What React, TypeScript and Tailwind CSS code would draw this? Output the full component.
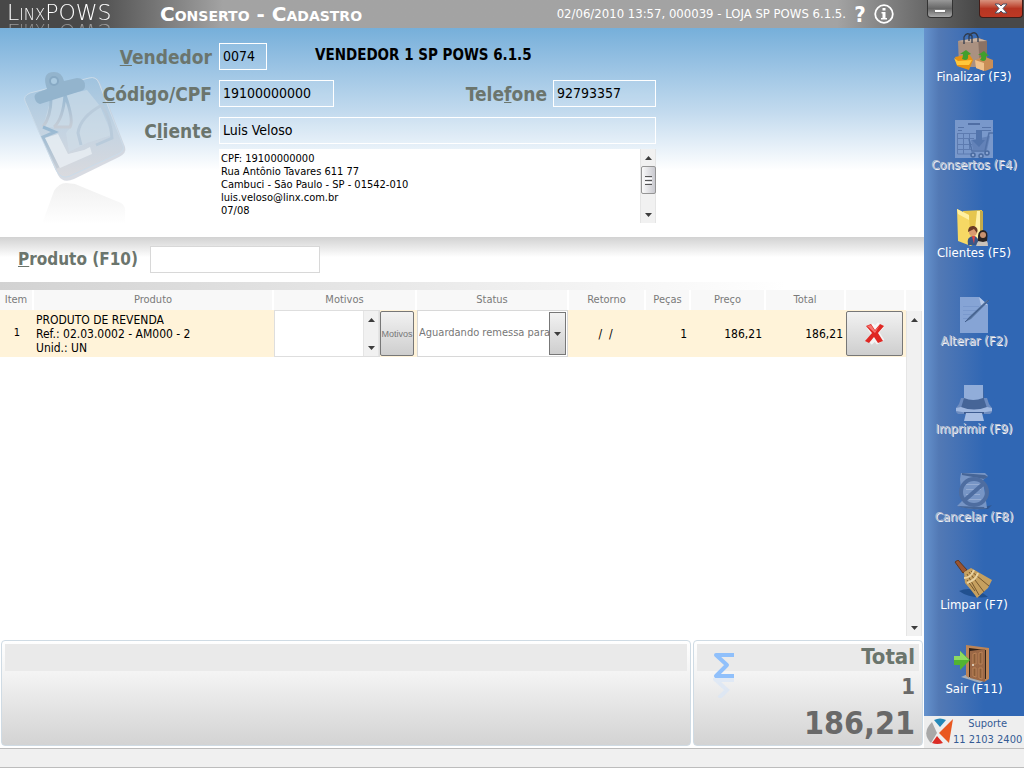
import type { ReactNode } from "react"

interface ActionItem {
  label: string
  icon: ReactNode
  disabled?: boolean
}

const labelClass = "text-[19px] leading-7 font-bold text-[#6b756d]"
const fieldClass = "h-[27px] border border-white bg-white/10 px-[3px] pb-[2px] text-sm text-black outline-none"

function BagIcon() {
  return (
    <svg width="40" height="40" viewBox="0 0 40 40">
      <path d="M4 9 L24 6 L33 9 V35 H5Z" fill="#aa9181" />
      <path d="M24 6 L33 9 V35 H26Z" fill="#8b7264" />
      <path d="M4 9 L24 6 L33 9 L13 10Z" fill="#c9b3a2" />
      <path d="M10 12 V5 Q13 -1 18 4 V11 M15 9 V4 Q21 -3 24 5 V10" fill="none" stroke="#303b4d" strokeWidth="1.3" />
      <path d="M1 25 L15 22 L19 28 L15 38 L3 34Z" fill="#e79212" />
      <path d="M0 26 L4 29 L18 28 L15 33 L3 33Z" fill="#ffc73b" />
      <path d="M22 28 L29 24 L39 28 V36 L31 39 L22 36Z" fill="#c98e56" />
      <path d="M21 28 L30 31 V39 L22 36Z" fill="#efc18b" />
      <path d="M8 27 Q9 25 9 22 L6 22 L12 18 L17 22 L14 23 Q15 28 11 28Z M26 28 Q28 26 27 23 L24 23 L30 19 L35 24 L32 24 Q33 29 29 29Z" fill="#419f2d" />
    </svg>
  )
}

function RepairsIcon() {
  return (
    <svg width="40" height="40" viewBox="0 0 40 40">
      <path d="M1 0 H39 V38 H1Z" fill="#7998cb" />
      <path d="M14 3 H26 V5 H14Z" fill="#506ea4" />
      <path d="M4 7.5 H10 M4 10.5 H8 M28 7.5 H37 M28 10.5 H37" stroke="#5674a9" />
      <path d="M3 13.5 H24 M3 18.5 H20 M3 24.5 H18 M3 29.5 H18 M3.5 14 V34 H17 M9.5 14 V34 M15.5 14 V30" fill="none" stroke="#5d7bb0" />
      <path d="M17 20 L36 16 L33 30 H19Z" fill="#6382b8" />
      <path d="M39 13 H35 L31 31 H18 L15 19" fill="none" stroke="#5272a8" strokeWidth="1.5" />
      <path d="M22 10 H28 V20 H31 L25 27 L18 20 H22Z" fill="#5274ac" />
      <g fill="#8ba5d0" stroke="#496a9f" strokeWidth="1.5"><circle cx="19" cy="35" r="2" /><circle cx="27" cy="36" r="2" /><circle cx="33" cy="33" r="2" /></g>
    </svg>
  )
}

function FolderIcon() {
  return (
    <svg width="40" height="40" viewBox="0 0 40 40">
      <path d="M9 3 L28 2 V31 L17 38 L9 32Z" fill="#e6c64d" />
      <path d="M26 3 H29 V30 L26 33Z" fill="#c5ab4a" />
      <path d="M23 3 H26 V31 H20Z" fill="#fff1a6" />
      <path d="M3 1 L15 7 L17 38 L4 33Z" fill="#f6d864" />
      <path d="M3 1 L15 7 L15 12 L4 6Z" fill="#fff0a2" />
      <path d="M14 37 Q12 29 19 28 Q25 28 25 37Z" fill="#385788" />
      <circle cx="19" cy="24" r="4" fill="#d99b70" />
      <path d="M14 24 Q14 17 20 18 Q25 20 23 25 L20 21Z" fill="#693a25" />
      <path d="M18 28 H21 L20 36Z" fill="#e14645" />
      <path d="M22 38 Q24 31 29 30 Q34 31 34 38Z" fill="#c8c2bb" />
      <path d="M24 33 Q23 22 29 22 Q35 22 33 33 L29 34Z" fill="#292323" />
      <circle cx="29" cy="27" r="3" fill="#c79170" />
    </svg>
  )
}

function EditIcon() {
  return (
    <svg width="40" height="40" viewBox="0 0 40 40">
      <path d="M6 1 H25 L34 9 V37 H6Z" fill="#86a4d5" />
      <path d="M25 1 L27 9 H34Z" fill="#b4c7e7" />
      <path d="M9 10.5 H25 M9 14.5 H24 M9 18.5 H20 M9 22.5 H15" stroke="#7a99cd" />
      <path d="M33 4 L15 21 L11 26 L17 23 L35 5Z" fill="#56749f" />
      <path d="M11 26 L35 4" stroke="#405c8b" />
    </svg>
  )
}

function PrinterIcon() {
  return (
    <svg width="40" height="40" viewBox="0 0 40 40">
      <path d="M7 14 H33 L35 20 L38 24 V28 L36 30 H4 L2 28 V24 L5 20Z" fill="#6d8cc0" />
      <path d="M10 1 H29 L30 15 L33 24 Q20 29 7 24 L10 14Z" fill="#466597" />
      <path d="M10 1 H29 V14 Q19 18 10 14Z" fill="#91add9" />
      <path d="M2 24 L7 23 Q20 28 33 23 L38 24 V27 Q20 31 2 27Z" fill="#9fb7df" />
      <path d="M10 28 H30 V30 H10Z" fill="#3e5c90" />
      <path d="M12 29 H28 L30 37 H10Z" fill="#a8bee3" />
    </svg>
  )
}

function CancelIcon() {
  return (
    <svg width="40" height="40" viewBox="0 0 40 40">
      <path d="M23 37 L38 33 L34 37Z" fill="#31578f" />
      <path d="M7 1 H31 L34 4 L29 8 L33 36 Q21 39 3 34 L8 29 L6 7Z" fill="#7795c5" />
      <path d="M8 1 L31 3 L34 5 L30 7 L8 3Z M3 34 Q16 38 31 37 L30 35Z" fill="#476697" />
      <path d="M12 12.5 H26 M12 17.5 H27 M12 22.5 H26 M12 27.5 H27" stroke="#94abd2" />
      <circle cx="20" cy="20" r="13" fill="none" stroke="#4e6da0" strokeWidth="4" />
      <path d="M11 28 L29 12" stroke="#4e6da0" strokeWidth="4" />
    </svg>
  )
}

function BroomIcon() {
  return (
    <svg width="40" height="40" viewBox="0 0 40 40">
      <path d="M5 31 Q19 25 34 37 Q16 39 5 31Z" fill="#21508f" />
      <path d="M1 2 L4 0 L13 10 L9 13Z" fill="#9b5531" stroke="#61371e" />
      <path d="M10 12 L17 8 L38 20 L34 28 L23 38 Q19 32 11 23Z" fill="#c6a05f" />
      <path d="M13 14 L25 35 M15 12 L30 32 M17 11 L35 26 M13 20 L21 31" stroke="#76582e" />
      <path d="M10 18 Q17 18 20 10 M13 23 Q22 20 24 13" fill="none" stroke="#ead3a0" strokeWidth="2" />
    </svg>
  )
}

function DoorIcon() {
  return (
    <svg width="40" height="40" viewBox="0 0 40 40">
      <path d="M7 33 L16 29 L33 35 L26 39Z" fill="#a2adba" />
      <path d="M12 1 L35 4 V35 L30 38 V8 L15 5 V34 L12 32Z" fill="#bd8557" />
      <path d="M15 4 L32 6 V35 L15 33Z" fill="#302219" />
      <path d="M16 7 L31 5 V38 L16 34Z" fill="#9b6846" />
      <path d="M19 10 L22 9 V20 L19 20Z M25 9 L28 8 V20 L25 20Z M19 24 H22 V33 L19 32Z M25 24 H28 V35 L25 34Z" fill="#8a5c38" stroke="#ba8257" />
      <path d="M0 12 H6 V7 L16 16 L6 26 V21 H0Z" fill="#51b331" />
      <path d="M0 12 H6 V7 L15 16 H0Z" fill="#8edb61" />
      <circle cx="19" cy="21" r="1" fill="#ece4d5" />
    </svg>
  )
}

function ClipboardArt() {
  return (
    <svg className="absolute left-5 top-11" width="112" height="152" viewBox="0 0 112 152" aria-hidden="true">
      <defs>
        <linearGradient id="paper" x2="0" y2="1">
          <stop stopColor="#9fc3df" />
          <stop offset=".5" stopColor="#c2d3e2" />
          <stop offset="1" stopColor="#dadade" />
        </linearGradient>
        <linearGradient id="ink" x2="0" y2="1">
          <stop stopColor="#96b8d2" />
          <stop offset="1" stopColor="#c6cdd6" />
        </linearGradient>
        <linearGradient id="mirror" x2="0" y2="1">
          <stop stopColor="#f0f0f0" />
          <stop offset="1" stopColor="#ffffff" />
        </linearGradient>
      </defs>
      <path d="M6 31 Q4 26 11 23 L70 6 Q77 4 80 11 L105 75 Q107 81 99 85 L54 107 Q43 112 38 103Z" fill="#c7ccd5" opacity=".7" />
      <path d="M5 29 Q3 24 10 21 L69 6 Q76 4 79 11 L103 73 Q105 79 98 82 L50 104 Q41 108 36 98Z" fill="url(#paper)" stroke="#cbdcea" />
      <path d="M31 26 L23 55 L50 56 L46 61 L49 80 L67 71 L92 63 L80 34 L67 18Z" fill="#d0deea" opacity=".55" />
      <path d="M31 27 Q31 44 23 55 M45 23 Q54 48 50 55 H34 M45 23 Q43 47 34 55" fill="none" stroke="url(#ink)" strokeWidth="3" />
      <path d="M23 55 L35 60 L23 65 L38 96" fill="none" stroke="url(#ink)" strokeWidth="3" />
      <path d="M82 33 Q60 45 58 61 L61 73 M82 33 Q91 48 92 66 L76 73" fill="none" stroke="#b9cbdb" strokeWidth="3" />
      <path d="M25 66 L38 62 L48 82 L64 78 L70 75 L72 82 L40 96Z" fill="#edf2f7" opacity=".7" />
      <path d="M15 27 Q13 22 19 20 L27 17 Q21 0 34 0 Q42 0 44 9 L57 6 Q65 6 65 14 Q65 18 61 19 L20 32 Q16 31 15 27Z" fill="#93b4cd" />
      <circle cx="34" cy="9" r="4" fill="#a9c9e0" stroke="#87a9c4" strokeWidth="2" />
      <path d="M34 119 Q39 111 46 111 L55 112 L101 131 Q106 134 105 141 V152 H22Z" fill="url(#mirror)" />
    </svg>
  )
}

function Arrow({ down = false }: { down?: boolean }) {
  return (
    <svg width="7" height="4" viewBox="0 0 7 4" className={down ? "rotate-180" : ""} aria-hidden="true">
      <path d="M0 4 L3.5 0 L7 4Z" fill="#3d3d3d" />
    </svg>
  )
}

function ScrollBar({ thumb = false }: { thumb?: boolean }) {
  return (
    <div className="flex w-4 shrink-0 flex-col items-center justify-between border-x border-[#e5e5e5] bg-[#f1f1f1]">
      <button type="button" aria-label="Rolar para cima" className="flex h-[17px] items-center justify-center"><Arrow /></button>
      {thumb && (
        <div className="mb-auto flex h-7 w-[15px] flex-col items-center justify-center gap-px rounded-xs border border-[#959595] bg-linear-to-r from-[#fafafa] to-[#c9c9cf]">
          <i className="h-px w-[7px] bg-[#555]" />
          <i className="h-px w-[7px] bg-white" />
          <i className="h-px w-[7px] bg-[#555]" />
          <i className="h-px w-[7px] bg-white" />
          <i className="h-px w-[7px] bg-[#555]" />
        </div>
      )}
      <button type="button" aria-label="Rolar para baixo" className="flex h-[17px] items-center justify-center"><Arrow down /></button>
    </div>
  )
}

const actions: ActionItem[] = [
  { label: "Finalizar (F3)", icon: <BagIcon /> },
  { label: "Consertos (F4)", icon: <RepairsIcon />, disabled: true },
  { label: "Clientes (F5)", icon: <FolderIcon /> },
  { label: "Alterar (F2)", icon: <EditIcon />, disabled: true },
  { label: "Imprimir (F9)", icon: <PrinterIcon />, disabled: true },
  { label: "Cancelar (F8)", icon: <CancelIcon />, disabled: true },
  { label: "Limpar (F7)", icon: <BroomIcon /> },
]

function ActionButton({ label, icon, disabled }: ActionItem) {
  return (
    <button type="button" disabled={disabled} className="flex w-full flex-col items-center">
      <span className="flex h-[37px] items-start">{icon}</span>
      <span className={`relative whitespace-nowrap text-[13px] leading-4 ${disabled ? "text-[#b4bfd2] [text-shadow:1px_1px_0_#f0f2f6]" : "text-white"}`}>
        {label}
      </span>
    </button>
  )
}

function TopBar() {
  return (
    <header className="flex h-7 shrink-0 overflow-hidden bg-[#a3a3a3]">
      <div className="flex h-7 flex-1 items-start bg-linear-to-r from-[#484848] from-15% via-[#a3a3a3] via-40% to-[#a3a3a3] text-white">
        <div className="ml-[7px] h-[22px] w-[129px] whitespace-nowrap font-['DejaVu_Sans',sans-serif] text-[22px] leading-[26px] font-extralight [font-variant-caps:small-caps] [-webkit-box-reflect:below_0px_linear-gradient(transparent,rgba(255,255,255,0.5))]">
          LinxPOWS
        </div>
        <h1 className="ml-6 whitespace-nowrap pt-1 font-['DejaVu_Sans',sans-serif] text-xl leading-5 font-bold [font-variant-caps:small-caps]">
          Conserto - Cadastro
        </h1>
      </div>
      <div className="flex items-start bg-linear-to-r from-[#a3a3a3] from-60% to-[#484848] to-90% text-white">
        <p className="whitespace-nowrap pt-1 text-[13px] leading-5">02/06/2010 13:57, 000039 - LOJA SP POWS 6.1.5.</p>
        <button type="button" className="ml-2 w-3 pt-[3px] text-[22px] leading-6 font-bold">?</button>
        <button type="button" aria-label="Informações" className="ml-2 pt-1">
          <svg width="20" height="20" viewBox="0 0 20 20">
            <circle cx="10" cy="10" r="8.8" fill="none" stroke="#fff" strokeWidth="1.8" />
            <path d="M8.5 4 H11.5 V6.5 H8.5Z M7.5 8 H11.5 V14 H13 V15.5 H7 V14 H8.5 V9.5 H7.5Z" fill="#fff" />
          </svg>
        </button>
        <button type="button" aria-label="Minimizar" className="ml-[33px] flex h-[18px] w-[26px] items-end justify-center rounded-b border border-t-0 border-[#333] bg-linear-to-b from-[#999] via-[#666] to-[#aaa] pb-1">
          <span className="h-1 w-3 border border-[#777] bg-white" />
        </button>
        <button type="button" aria-label="Fechar" className="ml-[26px] mr-px flex h-[18px] w-11 items-center justify-center rounded-b border border-t-0 border-[#421d18] bg-linear-to-b from-[#d8927e] via-[#b73522] to-[#bd3924]">
          <svg width="14" height="11" viewBox="0 0 14 11">
            <path d="M1 1 H5 L7 3 L9 1 H13 L9 5.5 L13 10 H9 L7 8 L5 10 H1 L5 5.5Z" fill="#fff" stroke="#4e5365" />
          </svg>
        </button>
      </div>
    </header>
  )
}

function CustomerForm() {
  return (
    <section className="relative h-[209px] shrink-0 bg-linear-to-b from-[#76afda] via-[#c2daee] via-40% to-white to-68% pt-[15px]">
      <ClipboardArt />
      <div className="relative grid grid-cols-[212px_1fr] gap-x-[7px] gap-y-[10px]">
        <label htmlFor="vendedor" className={`text-right ${labelClass} h-[27px]`}><u>V</u>endedor</label>
        <div className="flex items-start">
          <input id="vendedor" defaultValue="0074" className={`w-12 ${fieldClass}`} />
          <strong className="ml-12 text-[15px] leading-6 text-black">VENDEDOR 1 SP POWS 6.1.5</strong>
        </div>
        <label htmlFor="codigo" className={`text-right ${labelClass} h-[27px]`}><u>C</u>ódigo/CPF</label>
        <div className="flex h-[27px] w-[437px] items-start">
          <input id="codigo" defaultValue="19100000000" className={`w-[115px] ${fieldClass}`} />
          <label htmlFor="telefone" className={`ml-auto mr-[6px] ${labelClass}`}>Tele<u>f</u>one</label>
          <input id="telefone" defaultValue="92793357" className={`w-[103px] ${fieldClass}`} />
        </div>
        <label htmlFor="cliente" className={`text-right ${labelClass}`}>C<u>l</u>iente</label>
        <div className="w-[437px]">
          <input id="cliente" defaultValue="Luis Veloso" className={`block w-full ${fieldClass}`} />
          <div className="mt-[5px] flex h-[74px] bg-white">
            <textarea
              aria-label="Dados do cliente"
              className="flex-1 resize-none overflow-hidden px-[2px] pt-[3px] text-[11px] leading-[13px] text-black outline-none"
              defaultValue={"CPF: 19100000000\nRua Antônio Tavares 611 77\nCambuci - São Paulo - SP - 01542-010\nluis.veloso@linx.com.br\n07/08"}
            />
            <ScrollBar thumb />
          </div>
        </div>
      </div>
    </section>
  )
}

function ItemsTable() {
  const head = "border-r-2 border-white bg-[#f8f8f8] p-0 font-normal"
  return (
    <section className="flex flex-1">
      <div className="min-w-0 flex-1">
        <table className="w-full table-fixed border-separate border-spacing-0">
          <colgroup>
            <col className="w-[34px]" />
            <col />
            <col className="w-[143px]" />
            <col className="w-[152px]" />
            <col className="w-[77px]" />
            <col className="w-[45px]" />
            <col className="w-[75px]" />
            <col className="w-[80px]" />
            <col className="w-[60px]" />
          </colgroup>
          <thead>
            <tr className="h-5 text-[11px] leading-4 text-[#7a7a7a]">
              <th className={head}>Item</th>
              <th className={head}>Produto</th>
              <th className={head}>Motivos</th>
              <th className={head}>Status</th>
              <th className={head}>Retorno</th>
              <th className={head}>Peças</th>
              <th className={head}>Preço</th>
              <th className={head}>Total</th>
              <th className={head} aria-label="Excluir" />
            </tr>
          </thead>
          <tbody>
            <tr className="h-[47px] bg-[#fff3d9] text-xs text-black">
              <td className="p-0 text-center text-[11px]">1</td>
              <td className="whitespace-nowrap p-0 pl-[2px] leading-[14px]">
                PRODUTO DE REVENDA<br />Ref.: 02.03.0002 - AM000 - 2<br />Unid.: UN
              </td>
              <td className="p-0">
                <div className="flex h-[47px] items-center">
                  <div className="flex h-full w-[106px] border border-[#dedede] bg-white">
                    <textarea aria-label="Motivos" className="min-w-0 flex-1 resize-none outline-none" />
                    <ScrollBar />
                  </div>
                  <button type="button" className="h-[45px] w-[34px] rounded-xs border border-[#777] bg-linear-to-b from-[#f2f2f2] to-[#cecece] p-0 font-['Liberation_Sans',sans-serif] text-[9px] text-[#777]">
                    Motivos
                  </button>
                </div>
              </td>
              <td className="p-0">
                <div className="relative mr-px h-[47px] border border-[#d8d8d8] bg-white">
                  <select aria-label="Status" className="h-full w-full appearance-none pl-px text-[11px] text-[#777] outline-none">
                    <option>Aguardando remessa para</option>
                  </select>
                  <span className="pointer-events-none absolute inset-y-px right-px flex w-[17px] items-center justify-center border border-[#777] bg-linear-to-b from-[#f2f2f2] to-[#cecece]">
                    <Arrow down />
                  </span>
                </div>
              </td>
              <td className="whitespace-pre p-0 pr-1 text-center">/  /</td>
              <td className="p-0 pr-1 text-right">1</td>
              <td className="p-0 pr-1 text-right">186,21</td>
              <td className="p-0 pr-[3px] text-right">186,21</td>
              <td className="p-0">
                <button type="button" aria-label="Excluir item" className="flex h-[45px] w-[57px] items-center justify-center rounded-xs border border-[#777] bg-linear-to-b from-[#f2f2f2] to-[#cecece]">
                  <svg width="22" height="24" viewBox="0 0 22 24">
                    <path d="M6 4 L11 9 L17 3 M16 20 L11 14 L5 20 M7 5 L17 20" fill="none" stroke="#fff" strokeWidth="8" opacity=".7" />
                    <path d="M2 4 L7 2 L11 8 L16 2 L20 4 L14 11 L19 19 L14 21 L10 15 L5 21 L1 19 L8 11Z" fill="#df2723" />
                    <path d="M3 4 L7 3 L11 9 L16 3 L11 11Z" fill="#f57570" />
                  </svg>
                </button>
              </td>
            </tr>
          </tbody>
        </table>
      </div>
      <div className="flex w-[18px] flex-col pr-[2px]">
        <div className="h-[21px] bg-[#f8f8f8]" />
        <div className="flex flex-1"><ScrollBar /></div>
      </div>
    </section>
  )
}

function Summary() {
  const panel = "rounded border border-[#cfdbe4] bg-linear-to-b from-white via-[#f4f4f4] via-30% to-[#d3d3d3] p-[3px]"
  return (
    <section className="mt-1 flex h-[108px] shrink-0 gap-[2px] px-px pb-[2px]">
      <div className={`flex-1 ${panel}`}>
        <div className="h-[27px] bg-[#eaeaea]" />
      </div>
      <div className={`flex w-[230px] justify-between text-right font-bold ${panel}`}>
        <div className="relative flex-1">
          <div className="h-[27px] bg-[#eaeaea] pr-1 text-[22px] leading-[26px] text-[#6b756d]">Total</div>
          <div className="pr-1 text-[22px] leading-8 text-[#696969]">1</div>
          <div className="pr-1 text-[32px] leading-10 text-[#696969]">186,21</div>
          <svg className="absolute left-4 top-2" width="24" height="46" viewBox="0 0 24 46" aria-hidden="true">
            <path d="M21 3 H3 L14 13 L3 24 H21" fill="none" stroke="#90c0fb" strokeWidth="4" strokeLinejoin="round" />
            <path d="M21 28 H3 L14 38 L6 46" fill="none" stroke="#d8e6f7" strokeWidth="4" opacity=".7" />
          </svg>
        </div>
      </div>
    </section>
  )
}

function Sidebar() {
  return (
    <aside className="flex w-[100px] shrink-0 flex-col bg-linear-to-r from-[#6693ce] via-[#5279b5] via-15% to-[#3067b4] to-60%">
      <nav>
        {actions.map((action) => (
          <div key={action.label} className="h-[88px] pt-1">
            <ActionButton {...action} />
          </div>
        ))}
      </nav>
      <div className="flex-1">
        <ActionButton label="Sair (F11)" icon={<DoorIcon />} />
      </div>
      <a href="#suporte" className="flex h-8 items-center bg-[#eee] pl-px text-[11px] leading-4 text-[#355b95]">
        <svg width="28" height="28" viewBox="0 0 28 28" className="shrink-0">
          <path d="M7 4 L12 15 L6 25 Q-4 15 7 4Z" fill="#a8a8a8" />
          <path d="M9 2 Q15 -1 21 2 L15 9Z" fill="#2488b8" />
          <path d="M28 1 L24 25 L14 15Z" fill="#e95820" />
          <path d="M7 25 L12 18 L18 25 Q12 27 7 25Z" fill="#db2c25" />
        </svg>
        <span className="whitespace-nowrap text-center">Suporte<br />11 2103 2400</span>
      </a>
    </aside>
  )
}

export default function App() {
  return (
    <div className="flex min-h-screen flex-col bg-white font-['DejaVu_Sans_Condensed','Noto_Sans',sans-serif]">
      <TopBar />
      <div className="flex flex-1">
        <main className="flex min-w-0 flex-1 flex-col">
          <CustomerForm />
          <section className="flex h-[45px] shrink-0 items-start bg-linear-to-b from-[#d2d2d2] to-white to-45% pt-[9px] pl-[18px]">
            <label htmlFor="produto" className="w-[132px] text-[17px] leading-[27px] font-bold text-[#6b756d]"><u>P</u>roduto (F10)</label>
            <input id="produto" className="h-[27px] w-[170px] border border-[#d8d8d8] bg-white px-1 text-sm outline-none" />
          </section>
          <div className="h-2 shrink-0 bg-linear-to-r from-[#d2d2d2] to-white to-85%" />
          <ItemsTable />
          <Summary />
        </main>
        <Sidebar />
      </div>
      <footer className="h-5 shrink-0 border-y border-[#bcbcbc] bg-[#f0f0f0]" />
    </div>
  )
}
